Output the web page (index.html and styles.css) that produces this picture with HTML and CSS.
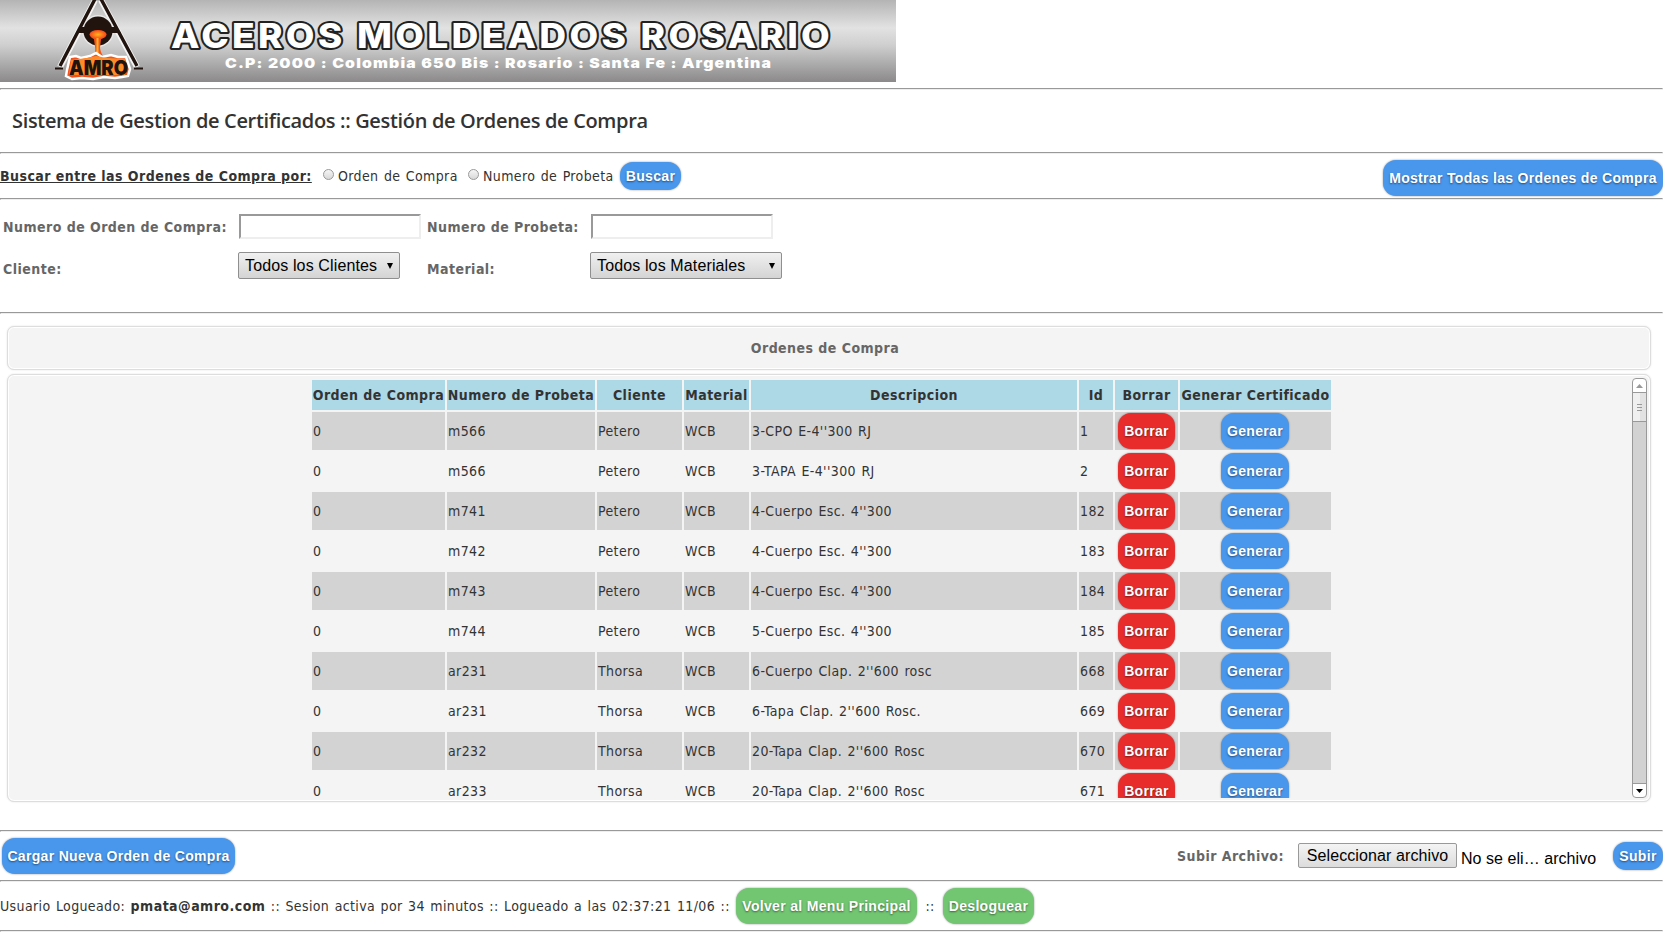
FILE: index.html
```html
<!DOCTYPE html>
<html lang="es">
<head>
<meta charset="utf-8">
<title>Sistema de Gestion de Certificados</title>
<link rel="stylesheet" href="styles.css">
</head>
<body>
<header class="banner">
<svg width="896" height="82" viewBox="0 0 896 82">
<defs>
<linearGradient id="steel" x1="0" y1="0" x2="0" y2="1"><stop offset="0" stop-color="#b4b4b4"/><stop offset=".34" stop-color="#e2e2e2"/><stop offset=".55" stop-color="#cfcfcf"/><stop offset="1" stop-color="#8b898a"/></linearGradient>
<radialGradient id="fire"><stop offset="0" stop-color="#ffb51c"/><stop offset="1" stop-color="#f6461a"/></radialGradient>
</defs>
<rect width="896" height="82" fill="url(#steel)"/>
<g fill="none" stroke="#f4f4f4" stroke-width="6"><path d="M95 0 60 67M101 0l36 67"/></g>
<circle cx="98" cy="31" r="16" fill="#e8e8e8"/>
<path d="M95-1 60 66M101-1l36 67" stroke="#21140f" stroke-width="3.4" fill="none"/>
<path d="M55 68.500h8M134 68.500h9" stroke="#21140f" stroke-width="2"/>
<path d="M80 27h36l5 6H76z" fill="#21140f"/>
<circle cx="98" cy="31" r="14.500" fill="#21140f"/>
<path d="M91 33h15c1 3-2 5-5 6l-1 9c1 6 3 8 6 11H89c5-3 7-7 6-12l-1-8c-3-1-4-4-3-6z" fill="#f4561a"/>
<ellipse cx="98" cy="34.500" rx="8.500" ry="4.500" fill="url(#fire)"/>
<path d="M97.500 38v17" stroke="#ffb52b" stroke-width="2"/>
<path d="M70 57l6-1 5 2 9-2 6-3 6 4 9-2 7 2 8 0 2 6 2 6-2 7-6 1-7 1-11-1-11 2-11-1-10 1-6-3 1-6z" fill="#f3501b" stroke="#fff" stroke-width="2.500"/>
<path d="M71 60l16-2 9-2 11 2 18 1 2 8-2 8H69z" fill="#ff8b28"/>
<text class="amro" x="69" y="74.500" textLength="59" lengthAdjust="spacingAndGlyphs">AMRO</text>
<text class="brand" x="171" y="48" textLength="662" lengthAdjust="spacingAndGlyphs">ACEROS MOLDEADOS ROSARIO</text>
<text class="address" x="225" y="68" textLength="547" lengthAdjust="spacingAndGlyphs">C.P: 2000 : Colombia 650 Bis : Rosario : Santa Fe : Argentina</text>
</svg>
</header>
<hr>
<h1>Sistema de Gestion de Certificados :: Gestión de Ordenes de Compra</h1>
<hr>
<section class="search">
<b class="lead">Buscar entre las Ordenes de Compra por:</b>
<i class="radio"></i><span class="opt opt-a">Orden de Compra</span>
<i class="radio"></i><span class="opt opt-b">Numero de Probeta</span>
<button class="btn small buscar">Buscar</button>
<button class="btn mostrar">Mostrar Todas las Ordenes de Compra</button>
</section>
<hr>
<section class="filters">
<label class="f1">Numero de Orden de Compra:</label><input type="text" class="field"><label class="f2">Numero de Probeta:</label><input type="text" class="field">
<label class="f3">Cliente:</label><span class="select sel-a">Todos los Clientes<i></i></span><label class="f4">Material:</label><span class="select sel-b">Todos los Materiales<i></i></span>
</section>
<hr>
<main>
<div class="panel heading"><span>Ordenes de Compra</span></div>
<div class="panel listing">
<div class="scroll">
<table>
<colgroup><col class="c1"><col class="c2"><col class="c3"><col class="c4"><col class="c5"><col class="c6"><col class="c7"><col class="c8"></colgroup>
<thead><tr><th>Orden de Compra</th><th>Numero de Probeta</th><th>Cliente</th><th>Material</th><th>Descripcion</th><th>Id</th><th>Borrar</th><th>Generar Certificado</th></tr></thead>
<tbody>
<tr><td>0</td><td>m566</td><td>Petero</td><td>WCB</td><td>3-CPO E-4''300 RJ</td><td>1</td><td><button class="btn red">Borrar</button></td><td><button class="btn gen">Generar</button></td></tr>
<tr><td>0</td><td>m566</td><td>Petero</td><td>WCB</td><td>3-TAPA E-4''300 RJ</td><td>2</td><td><button class="btn red">Borrar</button></td><td><button class="btn gen">Generar</button></td></tr>
<tr><td>0</td><td>m741</td><td>Petero</td><td>WCB</td><td>4-Cuerpo Esc. 4''300</td><td>182</td><td><button class="btn red">Borrar</button></td><td><button class="btn gen">Generar</button></td></tr>
<tr><td>0</td><td>m742</td><td>Petero</td><td>WCB</td><td>4-Cuerpo Esc. 4''300</td><td>183</td><td><button class="btn red">Borrar</button></td><td><button class="btn gen">Generar</button></td></tr>
<tr><td>0</td><td>m743</td><td>Petero</td><td>WCB</td><td>4-Cuerpo Esc. 4''300</td><td>184</td><td><button class="btn red">Borrar</button></td><td><button class="btn gen">Generar</button></td></tr>
<tr><td>0</td><td>m744</td><td>Petero</td><td>WCB</td><td>5-Cuerpo Esc. 4''300</td><td>185</td><td><button class="btn red">Borrar</button></td><td><button class="btn gen">Generar</button></td></tr>
<tr><td>0</td><td>ar231</td><td>Thorsa</td><td>WCB</td><td>6-Cuerpo Clap. 2''600 rosc</td><td>668</td><td><button class="btn red">Borrar</button></td><td><button class="btn gen">Generar</button></td></tr>
<tr><td>0</td><td>ar231</td><td>Thorsa</td><td>WCB</td><td>6-Tapa Clap. 2''600 Rosc.</td><td>669</td><td><button class="btn red">Borrar</button></td><td><button class="btn gen">Generar</button></td></tr>
<tr><td>0</td><td>ar232</td><td>Thorsa</td><td>WCB</td><td>20-Tapa Clap. 2''600 Rosc</td><td>670</td><td><button class="btn red">Borrar</button></td><td><button class="btn gen">Generar</button></td></tr>
<tr><td>0</td><td>ar233</td><td>Thorsa</td><td>WCB</td><td>20-Tapa Clap. 2''600 Rosc</td><td>671</td><td><button class="btn red">Borrar</button></td><td><button class="btn gen">Generar</button></td></tr>
</tbody>
</table>
</div>
<svg class="scrollbar" width="15" height="420" viewBox="0 0 15 420">
<rect x=".5" y=".5" width="14" height="419" rx="3.500" fill="#fff" stroke="#999"/>
<rect x="1" y="15" width="13" height="390" fill="#d2d2d2"/>
<rect x="1" y="15" width="7" height="28" fill="#f0f0f0"/><rect x="8" y="15" width="6" height="28" fill="#e2e2e2"/>
<path d="M0 14.500h15M0 43.500h15M0 405.500h15M5 26.500h5M5 29.500h5M5 32.500h5" stroke="#999"/>
<path d="M4 10h7L7.500 6z" fill="#999"/><path d="M4 411h7l-3.500 4z" fill="#000"/>
</svg>
</div>
</main>
<hr>
<section class="upload">
<button class="btn cargar">Cargar Nueva Orden de Compra</button>
<label class="f5">Subir Archivo:</label><span class="filebtn">Seleccionar archivo</span><span class="filename">No se eli… archivo</span>
<button class="btn small subir">Subir</button>
</section>
<hr>
<footer>
<span class="session">Usuario Logueado: <b>pmata@amro.com</b> :: Sesion activa por 34 minutos :: Logueado a las 02:37:21 11/06 ::</span>
<button class="btn green volver">Volver al Menu Principal</button>
<span class="sep">::</span>
<button class="btn green salir">Desloguear</button>
</footer>
<hr>
</body>
</html>
```
FILE: styles.css
```css
* { box-sizing: border-box; }
body {
  margin: 0;
  height: 932px;
  overflow: hidden;
  background: #fff;
  color: #333;
  font: 14px/20px "DejaVu Sans Condensed", "DejaVu Sans", sans-serif;
  letter-spacing: .37px;
  word-spacing: 1.1px;
  white-space: nowrap;
}
b, th, label, .heading { letter-spacing: .46px; word-spacing: 0; }
hr { height: 2px; margin: 0; border: 1px solid #999; border-right-color: #eee; border-bottom-color: #eee; }
.banner { height: 88px; word-spacing: 0; }
.banner svg { display: block; }
.amro { font: 900 20px Inter, sans-serif; fill: #21140f; letter-spacing: 0; }
.brand { font: 800 34px Inter, sans-serif; letter-spacing: 3px; fill: #fff; stroke: #222; stroke-width: 4px; paint-order: stroke; stroke-linejoin: round; }
.address { font: 900 13.5px Inter, sans-serif; letter-spacing: 1px; fill: #fff; }
h1 { margin: 0; height: 62px; padding: 17px 0 0 12px; font: 600 20px/28px "Open Sans", sans-serif; letter-spacing: -.33px; word-spacing: 0; }

.search { display: flex; height: 44px; align-items: flex-start; }
.lead { margin-top: 12px; width: 311px; text-decoration: underline; margin-right: 12px; }
.radio { width: 11px; height: 11px; margin: 15px 4px 0 0; border: 1px solid #999; border-radius: 50%; background: linear-gradient(#f6f6f6, #d8d8d8); }
.opt { margin-top: 12px; }
.opt-a { width: 130px; }
.opt-b { width: 137px; }

.btn {
  display: block;
  flex: none;
  height: 36px;
  padding: 0;
  border: 0;
  border-radius: 13px;
  background: #4897ed;
  color: #fff;
  font: bold 14px/36px "Liberation Sans", Arial, sans-serif;
  letter-spacing: .32px;
  word-spacing: 0;
  text-align: center;
  text-shadow: 0 1px 2px rgba(0,0,0,.5);
  box-shadow: 0 0 2px rgba(0,0,0,.45);
}
.small { height: 28px; line-height: 28px; }
.red { background: #e82c2c; width: 57px; margin: 0 0 0 2px; }
.gen { width: 68px; margin: 0 0 0 40px; }
.green { background: #72c672; }
.buscar { width: 61px; margin-top: 8px; }
.mostrar { width: 280px; margin: 6px 0 0 auto; }

.filters { display: grid; grid-template-columns: 236px 188px 163px auto; grid-template-rows: 38px 74px; justify-content: start; }
label { color: #666; font-weight: bold; }
.filters label { padding-left: 3px; }
.f1, .f2 { padding-top: 17px; }
.f3, .f4 { padding-top: 21px; }
.field { width: 182px; height: 25px; margin: 14px 0 0 3px; border: 2px solid #999; border-right-color: #eee; border-bottom-color: #eee; background: #fff; }
.field + label, .select + label { padding-left: 3px; }
.filters .field:last-of-type { margin-left: 4px; }
.select { display: flex; align-items: center; justify-content: space-between; height: 27px; margin: 14px 0 0 2px; padding: 0 6px; border: 1px solid #8f8f8f; border-radius: 2px; background: linear-gradient(#f0f0f0, #d4d4d4); color: #000; font: 16px/24px "Liberation Sans", Arial, sans-serif; letter-spacing: .13px; word-spacing: 0; }
.select i { border: 3px solid transparent; border-top: 6px solid #000; border-bottom: 0; }
.sel-a { width: 162px; }
.sel-b { width: 192px; margin-left: 3px; }

main { height: 516px; padding: 12px 12px 0 7px; }
.panel { border: 1px solid #ddd; border-radius: 7px; background: #f4f4f4; box-shadow: 0 0 2px rgba(0,0,0,.12), inset 0 0 0 1px #fff; }
.heading { height: 44px; padding-right: 8px; line-height: 42px; text-align: center; color: #666; font-weight: bold; }
.listing { display: flex; justify-content: space-between; height: 428px; margin-top: 4px; padding: 3px; }
.scroll { width: 1400px; height: 420px; margin-left: 300px; overflow: hidden; }
table { table-layout: fixed; width: 1023px; border-collapse: separate; border-spacing: 2px; margin-left: -1px; }
.c1 { width: 133px; } .c2 { width: 148px; } .c3 { width: 85px; } .c4 { width: 65px; }
.c5 { width: 326px; } .c6 { width: 34px; } .c7 { width: 63px; } .c8 { width: 151px; }
th { height: 30px; padding: 0; background: #add8e6; text-align: center; }
td { height: 38px; padding: 0 1px; }
tbody tr:nth-child(odd) td { background: #d3d3d3; }
.scrollbar { flex: none; }

.upload { display: flex; height: 48px; }
.cargar { width: 233px; margin: 6px 0 0 2px; }
.f5 { margin: 14px 14px 0 auto; }
.filebtn { width: 159px; height: 25px; margin: 11px 4px 0 0; border: 1px solid #999; border-radius: 2px; background: linear-gradient(#f4f4f4, #dcdcdc); text-align: center; color: #000; font: 16px/23px "Liberation Sans", Arial, sans-serif; letter-spacing: .1px; word-spacing: 0; }
.filename { width: 152px; margin-top: 17px; color: #000; font: 16px/20px "Liberation Sans", Arial, sans-serif; letter-spacing: .05px; word-spacing: 0; }
.subir { width: 50px; margin-top: 10px; }

footer { display: flex; height: 48px; }
.session { width: 736px; margin-top: 14px; }
.volver { width: 181px; margin-top: 6px; }
.sep { width: 26px; margin-top: 14px; text-align: center; }
.salir { width: 91px; margin-top: 6px; }
```
